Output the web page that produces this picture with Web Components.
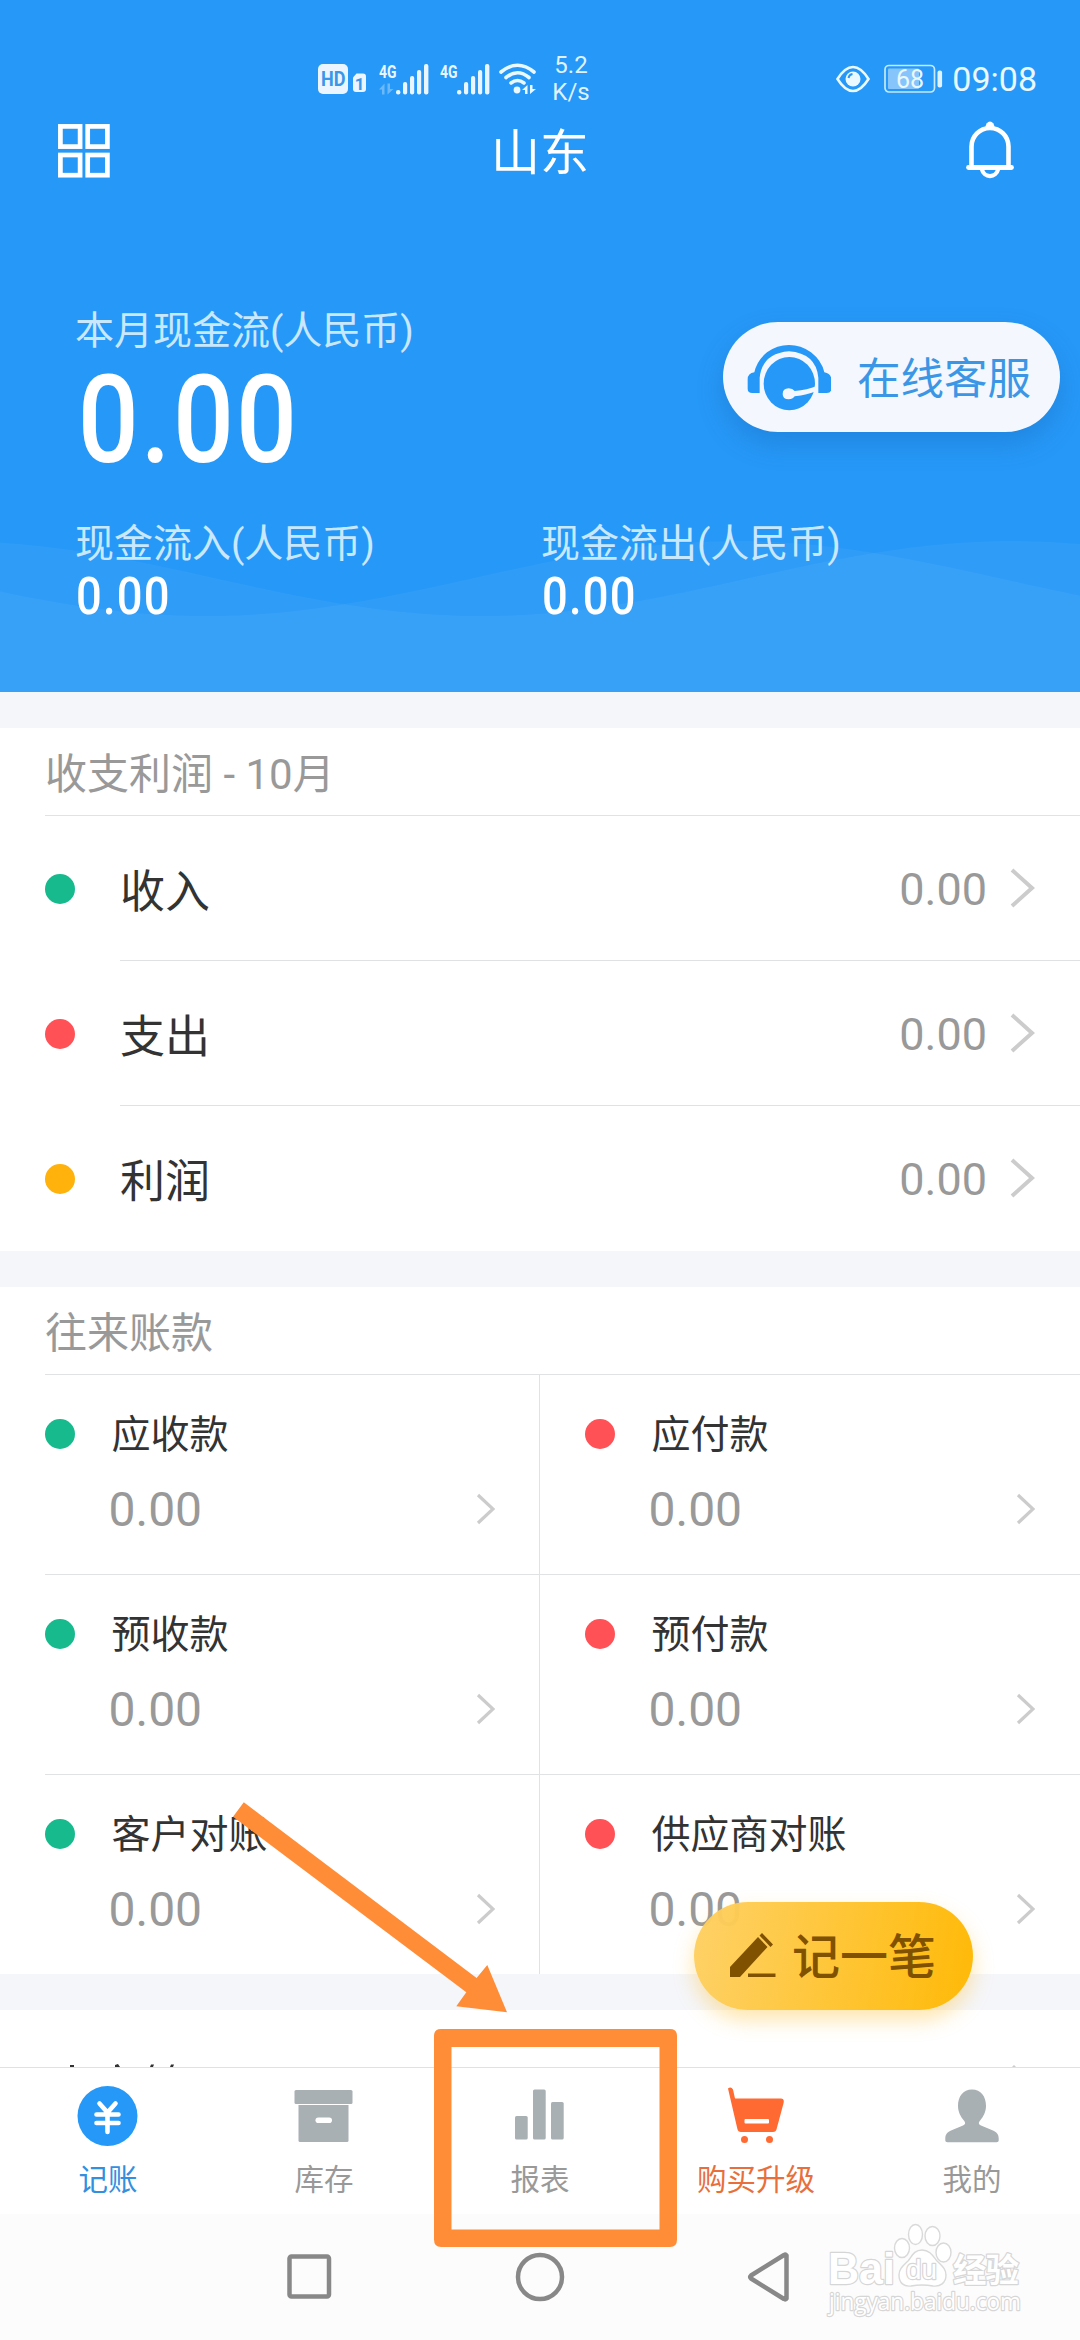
<!DOCTYPE html>
<html lang="zh-CN">
<head>
<meta charset="utf-8">
<title>记账</title>
<style>
html,body{margin:0;padding:0;width:1080px;height:2340px;overflow:hidden;background:#fff}
body{font-family:Roboto,"Noto Sans CJK SC",sans-serif;color:#333}
</style>
</head>
<body>
<ledger-app></ledger-app>
<script>
const define = (name, html, setup) => {
  const tpl = document.createElement('template');
  tpl.innerHTML = html;
  customElements.define(name, class extends HTMLElement {
    constructor() {
      super();
      this.attachShadow({mode: 'open'}).append(tpl.content.cloneNode(true));
    }
    connectedCallback() { if (setup) setup(this, this.shadowRoot); }
  });
};

define('signal-bars', `
<style>:host{display:block;width:50px;height:32px}svg{display:block;overflow:visible}</style>
<svg width="50" height="32" viewBox="0 0 50 32">
  <text x="0" y="14.500" font-family="Roboto" font-size="19" font-weight="700" fill="#eaf6ff" textLength="17.500" lengthAdjust="spacingAndGlyphs">4G</text>
  <g id="data" fill="#6bb9fb" display="none"><path d="M5.500 20.500v11H3v-5H0zM8.500 20.500v11l6-5.500H11v-5.500z"/></g>
  <g fill="#eaf6ff"><rect x="17" y="27" width="4.400" height="4.400" rx="2"/><rect x="24" y="19" width="4.200" height="12.400" rx="2"/><rect x="31" y="13" width="4.200" height="18.400" rx="2"/><rect x="38" y="7" width="4.200" height="24.400" rx="2"/><rect x="45" y="1" width="4.400" height="30.400" rx="2"/></g>
</svg>`, (el, root) => { if (el.hasAttribute('data')) root.getElementById('data').removeAttribute('display'); });

define('status-bar', `
<style>
:host{display:flex;height:54px;align-items:center;box-sizing:border-box;padding:0 43px 0 318px;color:#eaf8ff;font-family:Roboto,sans-serif}
svg{display:block;flex:none;overflow:visible}
.speed{display:flex;flex-direction:column;align-items:center;width:36px;margin-left:16px;font-size:24px;line-height:27px;color:#dff2ff}
.right{display:flex;align-items:center;margin-left:auto}
.time{font-size:34px;line-height:40px;margin-left:8px}
signal-bars.a{margin-left:13px}signal-bars.b{margin-left:11px}
</style>
<svg width="48" height="32" viewBox="0 0 48 32"><rect x="0" y="1" width="30" height="30" rx="5" fill="#eaf5ff"/><text x="3" y="23" font-family="Roboto" font-weight="700" font-size="20" textLength="24.500" lengthAdjust="spacingAndGlyphs" fill="#3a97e8">HD</text><path d="M38.500 10.500h6.500q3 0 3 3v12.500q0 3-3 3h-7q-3 0-3-3V14.500z" fill="#eaf5ff"/><text x="36.800" y="26.500" font-family="Roboto" font-weight="700" font-size="17" fill="#3a97e8">1</text></svg>
<signal-bars class="a" data></signal-bars><signal-bars class="b"></signal-bars>
<svg style="margin-left:8px" width="39" height="32" viewBox="0 0 39 32"><g fill="none" stroke="#eaf8ff" stroke-width="3.600" stroke-linecap="round"><path d="M3 9Q19.500-4.500 36 9M8 14.500Q19.500 5 31 14.500M13 20Q19.500 15 26 20"/></g><circle cx="19" cy="27" r="3.400" fill="#eaf8ff"/><path d="M29.500 22v9H27v-4h-3zM32 22v9l6-5h-3.500v-4z" fill="#eaf8ff"/></svg>
<div class="speed"><span>5.2</span><span>K/s</span></div>
<div class="right">
<svg width="34" height="28" viewBox="0 0 34 28"><path d="M1.500 14Q9 2 17 2t15.500 12Q25 26 17 26T1.500 14z" fill="none" stroke="#eaf8ff" stroke-width="2.600"/><circle cx="17" cy="14" r="7.500" fill="#eaf8ff"/><path d="M12.500 13a5 5 0 0 1 4-4" fill="none" stroke="#2698f7" stroke-width="2"/></svg>
<svg style="margin-left:14px" width="60" height="30" viewBox="0 0 60 30"><rect x="1" y="1.500" width="49.500" height="26.500" rx="4" fill="none" stroke="#c5e9ff" stroke-width="1.700"/><rect x="4" y="4.500" width="31" height="20.500" rx="1" fill="#86c5fb"/><text x="12" y="23.500" font-family="Roboto" font-size="25" fill="#eaf8ff">68</text><rect x="53.500" y="6.500" width="4.600" height="17" rx="2" fill="#dff3ff"/></svg>
<span class="time">09:08</span>
</div>`);

define('title-bar', `
<style>
:host{display:flex;height:90px;align-items:center;justify-content:space-between;box-sizing:border-box;padding:0 66px 0 58px;color:#fff}
h1{margin:0;font-size:49px;line-height:60px;font-weight:400;padding:6px 0 0 4px}
svg{display:block}
</style>
<svg width="52" height="54" viewBox="0 0 52 54" fill="none" stroke="#fff" stroke-width="4.700"><rect x="2.400" y="2.400" width="19.700" height="20.200"/><rect x="29.700" y="2.400" width="19.700" height="20.200"/><rect x="2.400" y="31" width="19.700" height="20.200"/><rect x="29.700" y="31" width="19.700" height="20.200"/></svg>
<h1><slot></slot></h1>
<svg width="48" height="60" viewBox="0 0 48 60" fill="none" stroke="#fff" stroke-linecap="round"><path d="M5.500 45V25.500a18.500 18.500 0 0 1 37 0V45" stroke-width="4.600"/><path d="M2.500 46.500h43" stroke-width="4.800"/><path d="M16 48.500a8.200 8.400 0 0 0 16 0" stroke-width="4.200"/><path d="M19.500 6.500a4.500 6 0 0 1 9 0z" fill="#fff" stroke="none"/></svg>`);

define('cash-stat', `
<style>
:host{display:block;width:466px}
.label{font-size:39px;line-height:52px;height:50px;color:#c9e8fe;white-space:nowrap}
.value{font-size:51px;line-height:57px;height:54px;color:#fff;font-weight:500;transform:scaleX(.89);transform-origin:0 50%;letter-spacing:1.400px;padding-left:1px}
:host([large]) .value{font-size:122px;line-height:131px;height:123px;letter-spacing:2.500px;padding-left:3px;transform:scaleX(.88)}
</style>
<div class="label"><slot name="label"></slot></div><div class="value"><slot></slot></div>`);

define('service-button', `
<style>
:host{display:flex;align-items:center;width:337px;height:110px;box-sizing:border-box;border-radius:55px;background:#f4f8fe;box-shadow:0 12px 26px rgba(20,90,170,.28);padding:2px 0 0 24px;color:#3b97e6;font-size:43.500px;line-height:60px}
svg{flex:none;display:block}span{margin-left:26px;padding-top:4px}
</style>
<svg width="84" height="68" viewBox="202 160 252 204"><path d="M204 266q0-18 20-21 8-35 38-60 30-22 66-22t66 22q32 25 40 60 21 5 21 21v28q0 13-14 13h-25v-46q-7-73-88-79-80 6-88 79v46h-22q-14 0-14-13z" fill="#2698f7"/><ellipse cx="329" cy="279" rx="77" ry="80" fill="#2698f7"/><path d="M345 301q38-3 66-15v14q-28 13-66 17-6 9-18 9-18 0-18-16t18-17q12 0 18 8z" fill="#f4f8fe"/></svg>
<span><slot></slot></span>`);

define('cash-header', `
<style>
:host{display:flex;flex-direction:column;height:692px;box-sizing:border-box;padding-top:52px;background:#2698f7;position:relative;overflow:hidden}
.waves{position:absolute;left:0;top:0}
status-bar,title-bar,.body{position:relative}
.body{padding:109px 0 0 75px}
.cols{display:flex;margin-top:40px}
service-button{position:absolute;right:20px;top:322px}
</style>
<svg class="waves" width="1080" height="692"><path/><path/></svg>
<status-bar></status-bar>
<title-bar>山东</title-bar>
<div class="body">
<cash-stat large><span slot="label">本月现金流(人民币)</span>0.00</cash-stat>
<div class="cols">
<cash-stat><span slot="label">现金流入(人民币)</span>0.00</cash-stat>
<cash-stat><span slot="label">现金流出(人民币)</span>0.00</cash-stat>
</div></div>
<service-button>在线客服</service-button>`, (el, root) => {
  [482, 206].forEach((trough, i) => {
    let d = 'M0 692';
    for (let x = 0; x <= 1080; x += 10) d += `L${x} ${(578.5 + 37.5 * Math.cos(2 * Math.PI * (x - trough) / 1060)).toFixed(1)}`;
    const p = root.querySelectorAll('.waves path')[i];
    p.setAttribute('d', d + 'L1080 692Z');
    p.setAttribute('fill', 'rgba(255,255,255,.043)');
  });
});

define('section-card', `
<style>
:host{display:block;background:#fff;margin-top:36px}
h2{margin:0 0 0 45px;height:87px;line-height:94px;font-size:42px;font-weight:400;color:#999;border-bottom:1px solid #dfe3e3}
</style>
<h2><slot name="title"></slot></h2><slot></slot>`);

define('metric-row', `
<style>
:host{display:flex;align-items:center;height:145px;padding-left:45px}
i{width:30px;height:30px;border-radius:50%;background:var(--dot);margin-right:45px;flex:none}
.main{flex:1;display:flex;align-items:center;align-self:stretch;border-bottom:1px solid #dfe2e2;font-size:45px;padding-right:45px;box-sizing:border-box}
:host([last]) .main{border-color:transparent}
.label{line-height:60px;padding-top:9px}
.value{margin-left:auto;color:#999;line-height:60px;padding-top:4px}
svg{display:block;margin-left:23px}
</style>
<i></i><div class="main"><span class="label"><slot></slot></span><span class="value">0.00</span>
<svg width="25" height="40" viewBox="0 0 25 40"><path d="M2 2l20 18L2 38" fill="none" stroke="#ccc" stroke-width="4"/></svg></div>`);

define('account-cell', `
<style>
:host{display:flex;flex-direction:column;flex:1;height:200px;box-sizing:border-box;padding:30px 45px 0 45px}
div{display:flex;align-items:center}
.top{height:58px;font-size:39px}
.top span{line-height:50px;padding-top:2px}
i{width:30px;height:30px;border-radius:50%;background:var(--dot);margin-right:36.500px;flex:none}
.bot{margin-top:12px;height:68px;padding-left:63.500px;font-size:48px;color:#999;justify-content:space-between}
svg{display:block}
</style>
<div class="top"><i></i><span><slot></slot></span></div>
<div class="bot"><span>0.00</span><svg width="19" height="32" viewBox="0 0 19 32"><path d="M2 2l15 14L2 30" fill="none" stroke="#ccc" stroke-width="3.200"/></svg></div>`);

define('account-pair', `
<style>
:host{display:flex;height:200px;background:linear-gradient(#dfe3e3,#dfe3e3) 45px 199px/1035px 1px no-repeat,linear-gradient(#dfe3e3,#dfe3e3) 539px 0/1px 200px no-repeat}
:host([last]){height:199px;background:linear-gradient(#dfe3e3,#dfe3e3) 539px 0/1px 200px no-repeat}
</style><slot></slot>`);

define('ledger-feed', `
<style>
:host{display:block;height:1375px;overflow:hidden;background:#f5f6fa}
.green{--dot:#17ba8c}.red{--dot:#ff5156}.amber{--dot:#ffb10c}
.next{margin-top:36px;background:#fff;height:57px}
svg{display:block}
section-card.m{height:523px}
</style>
<section-card class="m"><span slot="title">收支利润 - 10月</span>
<metric-row class="green">收入</metric-row><metric-row class="red">支出</metric-row><metric-row class="amber" last>利润</metric-row></section-card>
<section-card><span slot="title">往来账款</span>
<account-pair><account-cell class="green">应收款</account-cell><account-cell class="red">应付款</account-cell></account-pair>
<account-pair><account-cell class="green">预收款</account-cell><account-cell class="red">预付款</account-cell></account-pair>
<account-pair last><account-cell class="green">客户对账</account-cell><account-cell class="red">供应商对账</account-cell></account-pair></section-card>
<div class="next"><svg width="1080" height="57"><path d="M70 55h4v2h-4zM115 55l3-1 2 3h-5zM151 54.500h3l-1 2.500h-3zM171 54.500h3l-1 2.500h-3z" fill="#333"/><path d="M1012 57l2-2 2 2z" fill="#ccc"/></svg></div>`);

define('tab-item', `
<style>
:host{display:flex;flex-direction:column;align-items:center;flex:1;color:#999}
span{font-size:29.500px;line-height:40px;margin-top:9px}
::slotted(svg){display:block}
</style><slot name="icon"></slot><span><slot></slot></span>`);

define('tab-bar', `
<style>
:host{display:flex;height:147px;box-sizing:border-box;border-top:1px solid #dce4e3;background:#fff;padding-top:13px}
.on{color:#338fdf}.up{color:#e86f3c}
</style>
<tab-item class="on"><svg slot="icon" width="62" height="70" viewBox="77 2081 62 70"><circle cx="107.500" cy="2116" r="30" fill="#2698f7"/><path d="M99.500 2103.500l8 9 8-9M107.500 2112v20M96.500 2114.500h22M96.500 2123h22" fill="none" stroke="#fff" stroke-width="4.600" stroke-linecap="round"/></svg>记账</tab-item>
<tab-item><svg slot="icon" width="62" height="70" viewBox="292.500 2081 62 70" fill="#a8b0b3"><rect x="294" y="2090" width="58" height="14" rx="1.500"/><path d="M298 2105h50v35.500q0 1.500-1.500 1.500h-47q-1.500 0-1.500-1.500z"/><rect x="315" y="2117.500" width="16.500" height="5.600" rx="2.800" fill="#fff"/></svg>库存</tab-item>
<tab-item><svg slot="icon" width="62" height="70" viewBox="508 2081 62 70" fill="#a8b0b3"><rect x="514" y="2116" width="12.700" height="23.500" rx="1.500"/><rect x="532" y="2089.500" width="12.700" height="50" rx="1.500"/><rect x="550" y="2102" width="12.700" height="37.500" rx="1.500"/></svg>报表</tab-item>
<tab-item class="up"><svg slot="icon" width="62" height="70" viewBox="724 2081 62 70"><path d="M727 2088.500q3-2.500 5 1l2 9h46q3.500 0 2.600 4.500l-7 26q-.6 3-3.600 3h-32q-3 0-3.600-3z" fill="#ff6a33"/><rect x="743.500" y="2119" width="24.500" height="4.600" rx="1" fill="#fff"/><circle cx="743.500" cy="2139.500" r="3.500" fill="#ff6a33"/><circle cx="768.500" cy="2139.500" r="3.500" fill="#ff6a33"/></svg>购买升级</tab-item>
<tab-item><svg slot="icon" width="62" height="70" viewBox="940 2081 62 70"><path d="M971 2089.500c9 0 14 7 14 16.500 0 6-3 11-5.500 14-2.500 3-2 4 .5 5.500l12 5c4 2 5.700 4 5.700 8v2q0 1.800-2 1.800h-49.400q-2 0-2-1.800v-2c0-4 1.700-6 5.700-8l12-5c2.500-1.500 3-2.500.5-5.500-2.500-3-5.500-8-5.500-14 0-9.500 5-16.500 14-16.500z" fill="#a8b0b3"/></svg>我的</tab-item>`);

define('system-nav', `
<style>:host{display:flex;height:126px;background:#fcfcfc;align-items:center;padding-left:285px;gap:181px}svg{display:block}svg:last-of-type{margin-left:-1px}</style>
<svg width="48" height="52" viewBox="0 0 48 52" fill="none" stroke="#888" stroke-width="4.500"><rect x="4.500" y="5.500" width="39.500" height="40" rx="2"/></svg>
<svg width="52" height="52" viewBox="0 0 52 52" fill="none" stroke="#888" stroke-width="4.500"><circle cx="26" cy="26" r="22"/></svg>
<svg width="46" height="52" viewBox="0 0 46 52" fill="none" stroke="#888" stroke-width="4.500" stroke-linejoin="round"><path d="M40.500 4.500v43q-1 1.500-2.500.5L5 27.500q-1.500-1.500 0-3L38 4q1.500-1 2.500.5z"/></svg>`);

define('record-button', `
<style>
:host{display:flex;align-items:center;width:279px;height:108px;border-radius:54px;box-sizing:border-box;padding-left:36px;background:linear-gradient(100deg,rgba(254,208,98,.96),rgba(255,184,2,.98));box-shadow:0 10px 20px rgba(255,190,40,.38);color:#805200;font-size:48px;font-weight:500;line-height:60px}
span{margin-left:16px;padding-top:4px}svg{display:block}
</style>
<svg width="46" height="44" viewBox="0 0 46 44" fill="#805200" overflow="visible"><path d="M0 33L28 3l9.500 10L10 43H0zM29.500 1.500L32 -1l11 11.500L40.500 13z"/><path d="M18 39.500h27.500v3.500H18z"/></svg><span><slot></slot></span>`);

define('guide-marks', `
<style>:host{display:block;pointer-events:none}svg{display:block}</style>
<svg width="460" height="460" viewBox="225 1795 460 460"><path d="M243.800 1802.300L233 1816.700l233.300 175.600-10 14 50.700 6-19.700-47.300-10.700 13z" fill="#ff8d38"/><path fill-rule="evenodd" d="M441 2029h229q7 0 7 7v203.500q0 7.500-7 7.500H441q-7 0-7-7.500V2036q0-7 7-7zm10.500 18v182.500h208V2047z" fill="#ff8d38"/></svg>`);

define('source-mark', `
<style>:host{display:block;pointer-events:none}svg{display:block}text{paint-order:stroke;stroke:#d6d6d6;stroke-width:2.400px;stroke-linejoin:round;fill:#fff}</style>
<svg width="210" height="100" viewBox="820 2220 210 100">
<text x="828" y="2284" font-family="Liberation Sans" font-weight="700" font-size="45" textLength="67" lengthAdjust="spacingAndGlyphs">Bai</text>
<g fill="#fff" stroke="#d9d9d9" stroke-width="1.400"><ellipse cx="902" cy="2248" rx="7.500" ry="9.500"/><ellipse cx="915.500" cy="2234.500" rx="7" ry="10"/><ellipse cx="932.500" cy="2236" rx="7.500" ry="9.500"/><ellipse cx="943.500" cy="2252.500" rx="7.500" ry="9.500"/><path d="M922 2250c8 0 11 6 15 11 5 5 9 8 9 14 0 8-6 12-13 11-8-1.500-14-1.500-22 0-7 1-12-3-12-11 0-6 4-9 9-14 4-5 6-11 14-11z"/></g>
<text x="906" y="2279" font-family="Liberation Sans" font-weight="400" font-size="28" textLength="31" lengthAdjust="spacingAndGlyphs">du</text>
<text x="953" y="2281.500" font-family="Noto Sans CJK SC" font-weight="700" font-size="33.500" textLength="66">经验</text>
<text x="829" y="2310" font-family="Open Sans" font-size="24" textLength="192" lengthAdjust="spacingAndGlyphs">jingyan.baidu.com</text>
</svg>`);

define('ledger-app', `
<style>
:host{display:flex;flex-direction:column;position:relative;width:1080px;height:2340px;overflow:hidden}
record-button{position:absolute;left:694px;top:1902px}
guide-marks{position:absolute;left:225px;top:1795px}
source-mark{position:absolute;left:820px;top:2220px}
</style>
<cash-header></cash-header><ledger-feed></ledger-feed><tab-bar></tab-bar><system-nav></system-nav>
<record-button>记一笔</record-button><guide-marks></guide-marks><source-mark></source-mark>`);
</script>
</body>
</html>
